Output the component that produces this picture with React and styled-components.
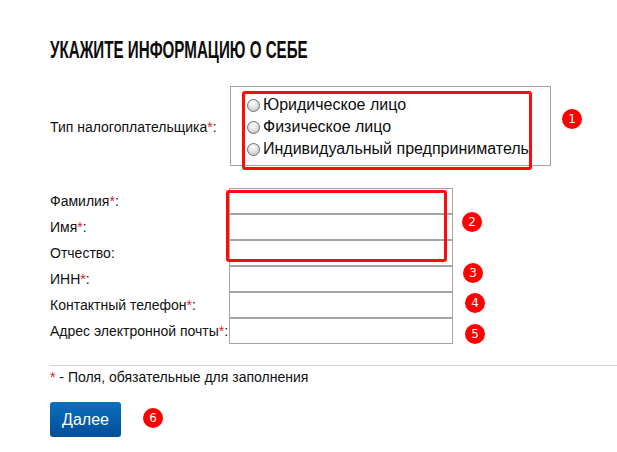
import React from "react";
import styled, { createGlobalStyle } from "styled-components";

const Global = createGlobalStyle`
  html, body { margin: 0; padding: 0; background: #fff; }
  body { font-family: "Liberation Sans", Arial, sans-serif; color: #111; }
`;

const Page = styled.div`
  position: relative;
  width: 617px;
  height: 452px;
  overflow: hidden;
  padding: 38px 0 0 50px;
  box-sizing: border-box;
`;

const Title = styled.h1`
  margin: 0 0 24px;
  height: 24px;
  line-height: 24px;
  font-family: "Liberation Sans", Arial, sans-serif;
  font-weight: 700;
  font-size: 23.5px;
  color: #0d0d0d;
  white-space: nowrap;
  transform: scaleX(0.645);
  transform-origin: 0 50%;
`;

const Form = styled.div`
  display: grid;
  grid-template-columns: 179px 224px;
  align-items: center;
`;

const Label = styled.label`
  font-size: 14px;
  line-height: 16px;
  color: #111;
  white-space: nowrap;
`;

const Req = styled.span`
  color: #e8141e;
`;

const RadioBox = styled.div`
  width: 321px;
  height: 80px;
  box-sizing: border-box;
  margin-left: 1px;
  margin-bottom: 22px;
  border: 1px solid #a3a3a3;
  padding: 7px 0 0 16px;
  display: flex;
  flex-direction: column;
`;

const TypeLabel = styled(Label)`
  margin-bottom: 20px;
`;

const RadioRow = styled.div`
  display: flex;
  align-items: center;
  height: 22px;
  gap: 3px;
  font-size: 16px;
  color: #0d0d0d;
  white-space: nowrap;
`;

const RadioDot = styled.span`
  width: 13px;
  height: 13px;
  box-sizing: border-box;
  border-radius: 50%;
  border: 1px solid #6e6e6e;
  background: radial-gradient(circle at 45% 30%, #ffffff 0%, #e4e4e4 45%, #b8b8b8 100%);
  flex: none;
`;

const Input = styled.div`
  height: 26px;
  box-sizing: border-box;
  border: 1px solid #a3a3a3;
  background: #fff;
`;

const Divider = styled.div`
  height: 1px;
  background: #d0d0d0;
  margin: 21px 0 0 0;
`;

const Note = styled.div`
  margin-top: 3px;
  font-size: 14px;
  line-height: 16px;
  color: #111;
`;

const Button = styled.button`
  margin-top: 17px;
  width: 71px;
  height: 35px;
  border: none;
  border-radius: 3px;
  background: linear-gradient(#0b70be, #004e98);
  color: #fff;
  font-family: "Liberation Sans", Arial, sans-serif;
  font-size: 16px;
  padding: 0;
  cursor: pointer;
`;

const Highlight = styled.div`
  position: absolute;
  box-sizing: border-box;
  border: 3px solid #ff0a0a;
  border-radius: 3px;
  pointer-events: none;
`;

const Badge = styled.div`
  position: absolute;
  width: 20px;
  height: 20px;
  margin: -10px 0 0 -10px;
  border-radius: 50%;
  background: #f00;
  color: #fff;
  font-family: "DejaVu Sans", Verdana, sans-serif;
  font-size: 12px;
  line-height: 20px;
  text-align: center;
`;

const fields = [
  { label: "Фамилия", req: true },
  { label: "Имя", req: true },
  { label: "Отчество", req: false },
  { label: "ИНН", req: true },
  { label: "Контактный телефон", req: true },
  { label: "Адрес электронной почты", req: true },
];

const radios = ["Юридическое лицо", "Физическое лицо", "Индивидуальный предприниматель"];

const boxes = [
  { left: 242, top: 91, width: 290, height: 79 },
  { left: 226, top: 190, width: 221, height: 72 },
];

const badges = [
  { n: 1, x: 572, y: 119 },
  { n: 2, x: 472, y: 222 },
  { n: 3, x: 473, y: 273 },
  { n: 4, x: 475, y: 303 },
  { n: 5, x: 475, y: 334 },
  { n: 6, x: 153, y: 418 },
];

export default function App() {
  return (
    <>
      <Global />
      <Page>
        <Title>УКАЖИТЕ ИНФОРМАЦИЮ О СЕБЕ</Title>
        <Form>
          <TypeLabel>
            Тип налогоплательщика<Req>*</Req>:
          </TypeLabel>
          <RadioBox>
            {radios.map((r) => (
              <RadioRow key={r}>
                <RadioDot />
                {r}
              </RadioRow>
            ))}
          </RadioBox>
          {fields.map((f) => (
            <React.Fragment key={f.label}>
              <Label>
                {f.label}
                {f.req && <Req>*</Req>}:
              </Label>
              <Input />
            </React.Fragment>
          ))}
        </Form>
        <Divider />
        <Note>
          <Req>*</Req> - Поля, обязательные для заполнения
        </Note>
        <Button>Далее</Button>
        {boxes.map((b, i) => (
          <Highlight key={i} style={{ left: b.left, top: b.top, width: b.width, height: b.height }} />
        ))}
        {badges.map((b) => (
          <Badge key={b.n} style={{ left: b.x, top: b.y }}>
            {b.n}
          </Badge>
        ))}
      </Page>
    </>
  );
}
